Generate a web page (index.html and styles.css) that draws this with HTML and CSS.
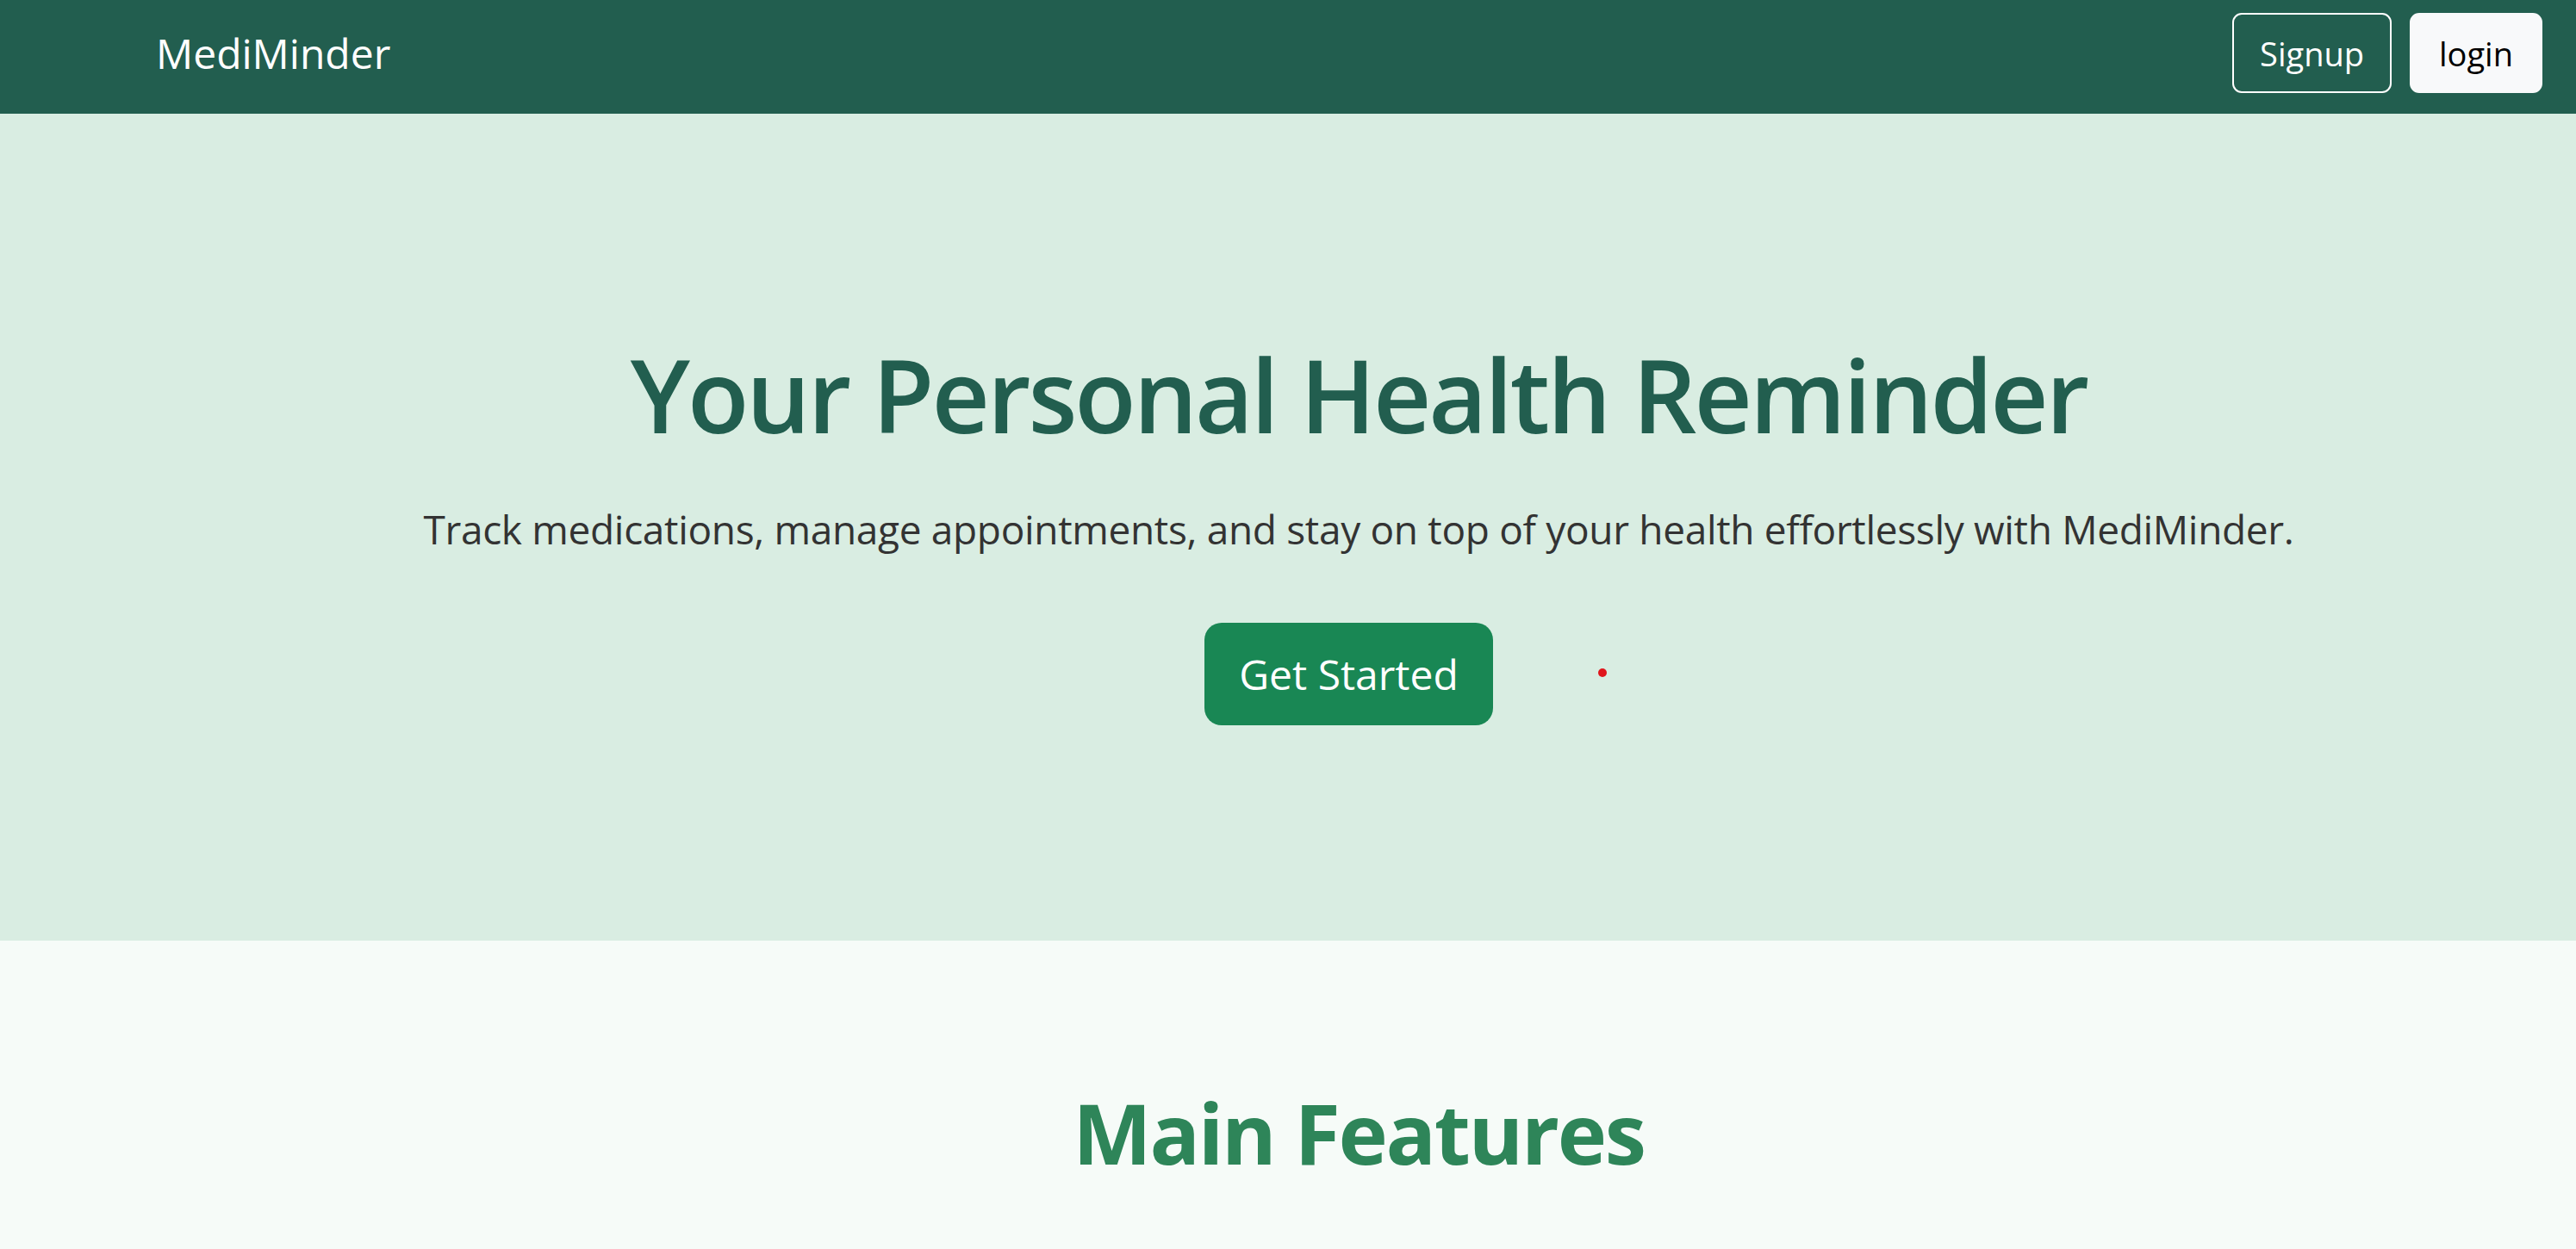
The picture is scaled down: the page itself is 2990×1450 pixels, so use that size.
FILE: index.html
```html
<!DOCTYPE html>
<html lang="en">
<head>
<meta charset="utf-8">
<title>MediMinder</title>
<link rel="stylesheet" href="styles.css">
</head>
<body>
<nav class="navbar">
  <a class="brand" href="#">MediMinder</a>
  <div class="nav-actions">
    <button class="btn btn-outline">Signup</button>
    <button class="btn btn-light">login</button>
  </div>
</nav>
<section class="hero">
  <h1 class="hero-title">Your Personal Health Reminder</h1>
  <p class="hero-lead">Track medications, manage appointments, and stay on top of your health effortlessly with MediMinder.</p>
  <div class="hero-cta">
    <a class="btn-start" href="#">Get Started</a>
    <span class="dot"></span>
  </div>
</section>
<section class="features">
  <h2 class="features-title">Main Features</h2>
</section>
</body>
</html>
```
FILE: styles.css
```css
* { box-sizing: border-box; }
html, body { margin: 0; padding: 0; }
body {
  font-family: "Open Sans", "Noto Sans", sans-serif;
  background: #f6fbf8;
  overflow: hidden;
}
.navbar {
  height: 132px;
  background: #225e4f;
  display: flex;
  justify-content: space-between;
  align-items: flex-start;
  padding: 15px 39px 0 181px;
}
.brand {
  color: #ffffff;
  text-decoration: none;
  font-size: 48px;
  line-height: 93px;
  height: 93px;
}
.nav-actions {
  display: flex;
  gap: 21px;
}
.btn {
  height: 93px;
  font-family: inherit;
  font-size: 38px;
  border-radius: 11px;
  cursor: pointer;
}
.btn-outline {
  padding: 0 30px;
  background: transparent;
  color: #ffffff;
  border: 2px solid #ffffff;
}
.btn-light {
  padding: 0 32px;
  background: #f8f9fa;
  color: #000000;
  border: 2px solid #f8f9fa;
}
.hero {
  position: relative;
  height: 960px;
  background: #d9ede2;
  padding: 256px 0 0 164px;
  text-align: center;
}
.hero-title {
  margin: 0;
  font-size: 117px;
  font-weight: 600;
  letter-spacing: -3px;
  line-height: 1.2;
  color: #225e4f;
}
.hero-lead {
  margin: 52px 0 0;
  font-size: 46px;
  letter-spacing: -0.33px;
  line-height: 1.5;
  color: #333333;
}
.hero-cta {
  margin-top: 74px;
  padding-right: 23px;
  display: flex;
  justify-content: center;
}
.btn-start {
  display: inline-flex;
  align-items: center;
  height: 119px;
  padding: 0 40px;
  border-radius: 20px;
  background: #198754;
  color: #ffffff;
  text-decoration: none;
  font-size: 48px;
}
.dot {
  position: absolute;
  left: 1855px;
  top: 644px;
  width: 10px;
  height: 10px;
  border-radius: 50%;
  background: #e0161c;
}
.features {
  padding: 164px 0 0 164px;
  text-align: center;
  min-height: 400px;
}
.features-title {
  margin: 0;
  font-size: 97px;
  font-weight: 700;
  letter-spacing: -2.3px;
  line-height: 1.2;
  color: #2e8559;
}
```
